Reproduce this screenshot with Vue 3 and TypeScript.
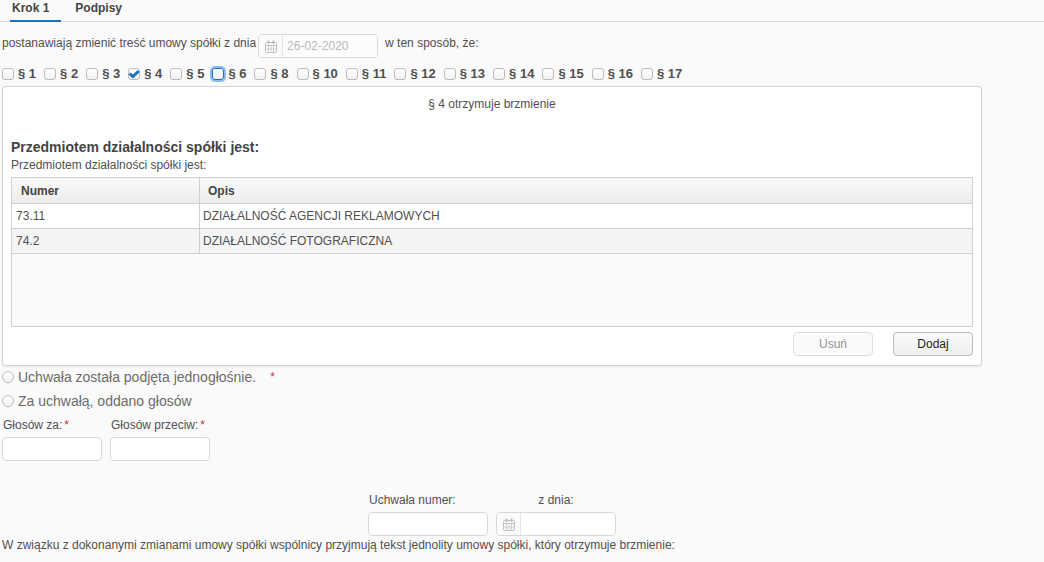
<script setup lang="ts">
import { ref } from 'vue'

interface Section {
  id: number
  checked: boolean
}

interface Activity {
  code: string
  description: string
}

const tabs = ['Krok 1', 'Podpisy']
const activeTab = ref('Krok 1')
const contractDate = '26-02-2020'

const sections = ref<Section[]>(
  [1, 2, 3, 4, 5, 6, 8, 10, 11, 12, 13, 14, 15, 16, 17].map((id) => ({ id, checked: id === 4 })),
)
const focusedSection = ref<number | null>(6)

const activities: Activity[] = [
  { code: '73.11', description: 'DZIAŁALNOŚĆ AGENCJI REKLAMOWYCH' },
  { code: '74.2', description: 'DZIAŁALNOŚĆ FOTOGRAFICZNA' },
]

const voting = ref('')
const votesFor = ref('')
const votesAgainst = ref('')
const resolutionNumber = ref('')
const resolutionDate = ref('')
</script>

<template>
  <main class="page">
    <nav class="tabs">
      <button
        v-for="tab in tabs"
        :key="tab"
        type="button"
        class="tab"
        :class="{ active: tab === activeTab }"
        @click="activeTab = tab"
      >
        {{ tab }}
      </button>
    </nav>

    <div class="intro">
      <label class="intro-text" for="contract-date">postanawiają zmienić treść umowy spółki z dnia</label>
      <div class="date-field disabled">
        <button type="button" class="date-button" aria-label="Kalendarz" disabled>
          <svg viewBox="0 0 12 13" width="12" height="13" fill="none" stroke="currentColor">
            <path d="M.5 3.500q0-1 1-1h9q1 0 1 1v8q0 1-1 1h-9q-1 0-1-1z" />
            <path d="M.5 5.500h11" />
            <path d="M.5 9h11M3.500 5.500v7M6 5.500v7M8.500 5.500v7" stroke-width=".7" />
            <path d="M3.500 4V.5M8.500 4V.5" stroke-width="2" />
          </svg>
        </button>
        <input id="contract-date" type="text" :value="contractDate" disabled />
      </div>
      <span class="intro-text">w ten sposób, że:</span>
    </div>

    <div class="sections">
      <label v-for="section in sections" :key="section.id" class="section">
        <input
          v-model="section.checked"
          type="checkbox"
          class="check"
          :class="{ focused: section.id === focusedSection }"
          @focus="focusedSection = section.id"
        />
        <svg v-if="section.checked" class="tick" viewBox="0 0 12 12" width="12" height="12">
          <path d="M1.500 5.500L4.800 8.500L10.800 3" fill="none" stroke="#1b70bd" stroke-width="3" />
        </svg>
        <span>§ {{ section.id }}</span>
      </label>
    </div>

    <section class="panel">
      <p class="panel-caption">§ 4 otrzymuje brzmienie</p>
      <h2>Przedmiotem działalności spółki jest:</h2>
      <p class="panel-note">Przedmiotem działalności spółki jest:</p>
      <div class="grid">
        <table>
          <thead>
            <tr>
              <th class="code" scope="col">Numer</th>
              <th scope="col">Opis</th>
            </tr>
          </thead>
          <tbody>
            <tr v-for="activity in activities" :key="activity.code">
              <td>{{ activity.code }}</td>
              <td>{{ activity.description }}</td>
            </tr>
          </tbody>
        </table>
      </div>
      <div class="actions">
        <button type="button" class="action" disabled>Usuń</button>
        <button type="button" class="action">Dodaj</button>
      </div>
    </section>

    <div class="options">
      <label class="option">
        <input v-model="voting" type="radio" name="voting" value="unanimous" />
        <span>Uchwała została podjęta jednogłośnie.</span>
        <span class="required option-mark">*</span>
      </label>
      <label class="option">
        <input v-model="voting" type="radio" name="voting" value="counted" />
        <span>Za uchwałą, oddano głosów</span>
      </label>
    </div>

    <div class="votes">
      <div class="field">
        <label for="votes-for">Głosów za:<span class="required">*</span></label>
        <input id="votes-for" v-model="votesFor" type="text" class="box small" />
      </div>
      <div class="field">
        <label for="votes-against">Głosów przeciw:<span class="required">*</span></label>
        <input id="votes-against" v-model="votesAgainst" type="text" class="box small" />
      </div>
    </div>

    <div class="resolution">
      <div class="field">
        <label for="resolution-number">Uchwała numer:</label>
        <input id="resolution-number" v-model="resolutionNumber" type="text" class="box" />
      </div>
      <div class="field">
        <label class="centered" for="resolution-date">z dnia:</label>
        <div class="date-field">
          <button type="button" class="date-button" aria-label="Kalendarz">
            <svg viewBox="0 0 12 13" width="12" height="13" fill="none" stroke="currentColor">
              <path d="M.5 3.500q0-1 1-1h9q1 0 1 1v8q0 1-1 1h-9q-1 0-1-1z" />
              <path d="M.5 5.500h11" />
              <path d="M.5 9h11M3.500 5.500v7M6 5.500v7M8.500 5.500v7" stroke-width=".7" />
              <path d="M3.500 4V.5M8.500 4V.5" stroke-width="2" />
            </svg>
          </button>
          <input id="resolution-date" v-model="resolutionDate" type="text" />
        </div>
      </div>
    </div>

    <p class="closing">
      W związku z dokonanymi zmianami umowy spółki wspólnicy przyjmują tekst jednolity umowy spółki, który otrzymuje
      brzmienie:
    </p>
  </main>
</template>

<style>
body {
  background: #fafafa;
}
</style>

<style scoped>
.page {
  font: 12px/16px 'Liberation Sans', Arial, sans-serif;
  color: #505050;
}

.page * {
  box-sizing: border-box;
}

p,
h2 {
  margin: 0;
}

button,
input {
  font: inherit;
  color: inherit;
}

.tabs {
  display: flex;
  gap: 8px;
  height: 22px;
  padding-left: 10px;
  border-bottom: 1px solid #d9dadc;
}

.tab {
  height: 22px;
  padding: 0 6px 6px;
  border: 0;
  background: none;
  color: #444;
  font-weight: bold;
}

.tab.active {
  padding: 0 12px 4px 2px;
  border-bottom: 2px solid #1d6fbf;
}

.intro {
  display: flex;
  padding: 12px 2px 0;
}

.intro-text {
  padding-top: 1px;
}

.intro label {
  margin-right: 2px;
}

.intro .date-field {
  margin-right: 7px;
}

.date-field {
  display: flex;
  width: 120px;
  height: 24px;
  border: 1px solid #d8d8d8;
  border-radius: 4px;
  background: #fff;
  overflow: hidden;
}

.date-button {
  display: flex;
  align-items: center;
  justify-content: center;
  width: 24px;
  padding: 0;
  border: 0;
  border-right: 1px solid #e4e4e4;
  background: #fafafa;
  color: #c0c0c0;
}

.date-field input {
  flex: 1;
  min-width: 0;
  padding: 0 4px;
  border: 0;
  background: #fff;
}

.disabled {
  background: #fcfcfc;
}

.disabled input {
  background: #fcfcfc;
  color: #b9b9b9;
}

.sections {
  display: flex;
  gap: 8px;
  padding: 8px 2px 4px;
  font-size: 13px;
  font-weight: bold;
}

.section {
  display: flex;
  align-items: center;
  gap: 4px;
  position: relative;
  white-space: nowrap;
}

.check,
.option input {
  appearance: none;
  flex: none;
  width: 12px;
  height: 12px;
  margin: 0;
  border: 1px solid #bcbcbc;
  border-radius: 3px;
  background: linear-gradient(#fff, #f1f1f1);
}

.check.focused {
  outline: none;
  border-color: #1b6fc0;
  box-shadow: 0 0 0 2px #8abcec;
}

.tick {
  position: absolute;
  left: 0;
  top: 2px;
}

.panel {
  margin: 0 62px 0 2px;
  padding: 9px 8px;
  border: 1px solid #d2d2d2;
  border-radius: 4px;
  background: #fff;
  box-shadow: 0 1px 2px #e6e6e6;
}

.panel-caption {
  text-align: center;
}

h2 {
  margin-top: 25px;
  color: #444;
  font-size: 14px;
  line-height: 20px;
}

.grid {
  height: 150px;
  margin-top: 4px;
  border: 1px solid #d0d0d0;
  background: #fafafa;
}

table {
  width: 100%;
  table-layout: fixed;
  border-spacing: 0;
}

th,
td {
  height: 25px;
  padding: 0 3px;
  border-bottom: 1px solid #d0d0d0;
  text-align: left;
}

th {
  height: 26px;
  padding: 0 8px;
  background: linear-gradient(#fafafa, #ececec);
  color: #444;
}

.code {
  width: 188px;
  padding-left: 9px;
}

th:first-child,
td:first-child {
  border-right: 1px solid #d0d0d0;
}

td:first-child {
  padding-left: 4px;
}

td {
  background: #fff;
}

tr:nth-child(even) td {
  background: #f4f4f4;
}

.actions {
  display: flex;
  justify-content: flex-end;
  gap: 20px;
  margin-top: 5px;
}

.action {
  width: 80px;
  height: 24px;
  padding: 0;
  border: 1px solid #bcbcbc;
  border-radius: 4px;
  background: linear-gradient(#fafafa, #efefef);
  color: #1c1c1c;
}

.action:disabled {
  border-color: #dedede;
  background: #fafafa;
  color: #929292;
}

.options {
  display: flex;
  flex-direction: column;
  margin-top: -1px;
  padding-left: 2px;
  font-size: 14px;
  line-height: 24px;
  color: #6c6c6c;
}

.option {
  display: flex;
  align-items: center;
  gap: 4px;
}

.option input {
  border-radius: 50%;
}

.required {
  margin-left: 2px;
  color: #c8304a;
}

.option-mark {
  margin-left: 10px;
  font-size: 12px;
}

.votes {
  display: flex;
  gap: 8px;
  padding: 4px 2px 0;
}

.field {
  display: flex;
  flex-direction: column;
  gap: 4px;
}

.field label {
  padding-left: 1px;
}

.field .centered {
  padding: 0;
  text-align: center;
}

.box {
  width: 120px;
  height: 24px;
  padding: 0 4px;
  border: 1px solid #d8d8d8;
  border-radius: 4px;
  background: #fff;
}

.small {
  width: 100px;
}

.resolution {
  display: flex;
  justify-content: center;
  gap: 8px;
  margin: 31px 62px 0 2px;
}

.closing {
  padding: 1px 2px;
}
</style>
